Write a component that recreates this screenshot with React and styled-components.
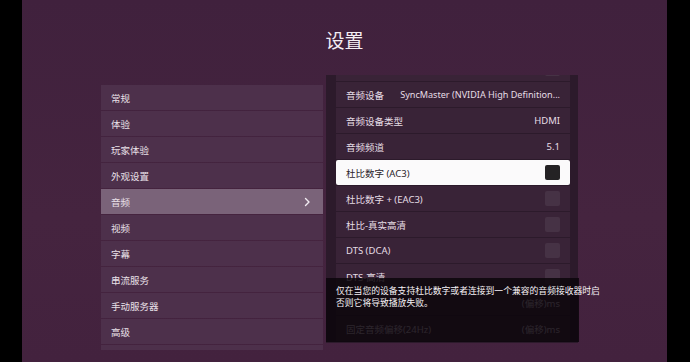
import React from 'react';
import styled, { createGlobalStyle } from 'styled-components';

const GlobalStyle = createGlobalStyle`
  html, body {
    margin: 0;
    padding: 0;
    background: #000;
  }
  body {
    font-family: "Noto Sans", "Noto Sans CJK SC", sans-serif;
  }
`;

const Frame = styled.div`
  width: 690px;
  height: 362px;
  background: #000;
  display: flex;
  overflow: hidden;
`;

const Screen = styled.div`
  margin-left: 22px;
  width: 645px;
  height: 362px;
  background: linear-gradient(180deg, #40213d 0%, #45243f 60%, #43223e 100%);
  display: flex;
  flex-direction: column;
`;

const Title = styled.h1`
  margin: 0;
  height: 75px;
  padding-top: 28px;
  box-sizing: border-box;
  text-align: center;
  font-size: 19px;
  line-height: 24px;
  font-weight: 400;
  color: #f4eef4;
  font-family: "Noto Sans CJK SC", sans-serif;
`;

const Body = styled.div`
  display: flex;
  align-items: flex-start;
  padding-left: 79px;
  gap: 3px;
`;

const Menu = styled.ul`
  list-style: none;
  margin: 10px 0 0;
  padding: 0;
  width: 222px;
  height: 265px;
  overflow: hidden;
  display: flex;
  flex-direction: column;
  gap: 1px;
`;

const MenuItem = styled.li`
  flex: 0 0 25px;
  display: flex;
  align-items: center;
  justify-content: space-between;
  padding: 0 12px 0 10px;
  background: ${({ $active }) => ($active ? '#7a6379' : '#4d304b')};
  color: #e9e0e8;
  font-size: 9.5px;
  font-family: "Noto Sans CJK SC", sans-serif;
`;

const Chevron = () => (
  <svg width="7" height="10" viewBox="0 0 7 10">
    <path d="M1.5 1.5 L5 5 L1.5 8.5" fill="none" stroke="#f2ecf2" strokeWidth="1.4" strokeLinecap="round" strokeLinejoin="round" />
  </svg>
);

const PanelWrap = styled.div`
  position: relative;
  width: 252px;
`;

const Panel = styled.div`
  height: 268px;
  overflow: hidden;
  background: #2c1a2b;
  padding: 0 8px 0 10px;
  box-sizing: border-box;
`;

const RowList = styled.div`
  display: flex;
  flex-direction: column;
  gap: 1px;
  margin-top: -19px;
`;

const Row = styled.div`
  flex: 0 0 25px;
  display: flex;
  align-items: center;
  gap: 14px;
  padding: 0 10px;
  border-radius: ${({ $active }) => ($active ? '2px' : '0')};
  background: ${({ $active }) => ($active ? '#fbfafb' : '#392337')};
  color: ${({ $active }) => ($active ? '#2a2329' : '#e6dde5')};
  font-size: 9.5px;
`;

const Label = styled.span`
  flex-shrink: 0;
  white-space: nowrap;
`;

const Value = styled.span`
  margin-left: auto;
  white-space: nowrap;
  font-size: ${({ $small }) => ($small ? '9.1px' : '9.5px')};
`;

const Check = styled.span`
  margin-left: auto;
  width: 15px;
  height: 15px;
  border-radius: 2px;
  background: ${({ $on }) => ($on ? '#242224' : 'rgba(255,255,255,0.07)')};
`;

const Tooltip = styled.div`
  position: absolute;
  left: 0;
  top: 203px;
  width: 253px;
  height: 64px;
  box-sizing: border-box;
  padding: 7px 0 0 10px;
  background: rgba(12, 6, 12, 0.86);
  color: #f6f2f6;
  font-size: 8.8px;
  line-height: 11.5px;
  white-space: nowrap;
  font-family: "Noto Sans CJK SC", sans-serif;
`;

const menu = ['常规', '体验', '玩家体验', '外观设置', '音频', '视频', '字幕', '串流服务', '手动服务器', '高级', ''];

const rows = [
  { label: '', check: false },
  { label: '音频设备', value: 'SyncMaster (NVIDIA High Definition...', small: true },
  { label: '音频设备类型', value: 'HDMI' },
  { label: '音频频道', value: '5.1' },
  { label: '杜比数字 (AC3)', check: true, active: true },
  { label: '杜比数字 + (EAC3)', check: false },
  { label: '杜比-真实高清', check: false },
  { label: 'DTS (DCA)', check: false },
  { label: 'DTS-高清', check: false },
  { label: '', value: '(偏移)ms' },
  { label: '固定音频偏移(24Hz)', value: '(偏移)ms' },
];

export default function App() {
  return (
    <>
      <GlobalStyle />
      <Frame>
        <Screen>
          <Title>设置</Title>
          <Body>
            <Menu>
              {menu.map((m, i) => (
                <MenuItem key={i} $active={m === '音频'}>
                  {m}
                  {m === '音频' && <Chevron />}
                </MenuItem>
              ))}
            </Menu>
            <PanelWrap>
              <Panel>
                <RowList>
                  {rows.map((r, i) => (
                    <Row key={i} $active={r.active}>
                      <Label>{r.label}</Label>
                      {r.value !== undefined ? (
                        <Value $small={r.small}>{r.value}</Value>
                      ) : (
                        <Check $on={r.check} />
                      )}
                    </Row>
                  ))}
                </RowList>
              </Panel>
              <Tooltip>
                仅在当您的设备支持杜比数字或者连接到一个兼容的音频接收器时启
                <br />
                否则它将导致播放失败。
              </Tooltip>
            </PanelWrap>
          </Body>
        </Screen>
      </Frame>
    </>
  );
}
